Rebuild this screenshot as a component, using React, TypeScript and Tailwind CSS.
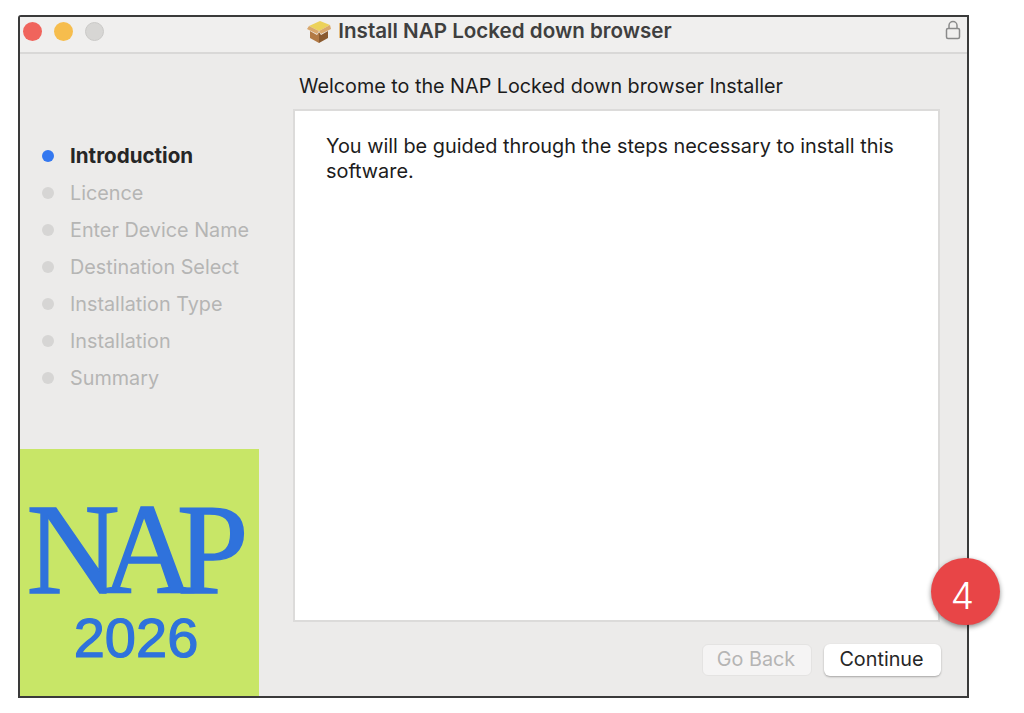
export default function App() {
  const steps = ["Licence", "Enter Device Name", "Destination Select", "Installation Type", "Installation", "Summary"];
  return (
    <div className="relative w-[1024px] h-[713px] bg-white overflow-hidden pl-[18px] pt-[15px] font-['Inter','Liberation_Sans',sans-serif]">
      <div className="flex flex-col w-[951px] h-[683px] border-2 border-[#3a3a3a] bg-[#ecebea] rounded-tl-[3px]">
        <div className="relative flex items-center h-[37px] bg-[#f0efee] border-b-2 border-[#d9d8d7] pl-[3px] pb-[6px] shrink-0">
          <div className="flex gap-[12px]">
            <span className="w-[19px] h-[19px] rounded-full bg-[#f0645c]" />
            <span className="w-[19px] h-[19px] rounded-full bg-[#f6bd4d]" />
            <span className="w-[19px] h-[19px] rounded-full bg-[#d7d6d4] border border-[#cbcac8]" />
          </div>
          <div className="flex-1 flex justify-center items-center gap-[7px] pr-[70px]">
            <svg width="24" height="22" viewBox="0 0 24 22">
              <path d="M13 0 L23 4 L12 10 L2 5 Z" fill="#ecd25a" />
              <path d="M2 5 L12 10 L23 4 L24 8 L14 13 L12 10 L10 13 L0 8 Z" fill="#d9a76c" />
              <path d="M3 10 L10 14 L12 11 L12 22 L3 17 Z" fill="#b27a45" />
              <path d="M21 10 L14 14 L12 11 L12 22 L21 17 Z" fill="#8a5a2f" />
            </svg>
            <span className="text-[20.6px] leading-none font-semibold text-[#3f3f3f]">Install NAP Locked down browser</span>
          </div>
          <svg className="mr-[6px] mb-[4px]" width="16" height="20" viewBox="0 0 16 20" fill="none" stroke="#8a8a8a" strokeWidth="1.5">
            <rect x="1.5" y="8.5" width="13" height="10" rx="1.5" />
            <path d="M4 8.5 V5.5 a4 4 0 0 1 8 0 V8.5" />
          </svg>
        </div>
        <div className="flex flex-1 min-h-0">
          <div className="flex flex-col justify-between w-[239px] shrink-0">
            <ul className="flex flex-col gap-[13px] pt-[90px] pl-[22px]">
              <li className="flex items-center h-[24px] gap-[16px] text-[20.6px] font-bold text-[#262626]">
                <span className="w-[12px] h-[12px] rounded-full bg-[#3478f0]" />
                <span>Introduction</span>
              </li>
              {steps.map((s) => (
                <li key={s} className="flex items-center h-[24px] gap-[16px] text-[19.8px] text-[#b5b5b4]">
                  <span className="w-[12px] h-[12px] rounded-full bg-[#d6d5d4]" />
                  <span className="pt-[2px]">{s}</span>
                </li>
              ))}
            </ul>
            <div className="flex flex-col items-center h-[247px] bg-[#c8e667] text-[#2f72dc] overflow-hidden">
              <span className="mt-[51px] pr-[22px] text-[129px] leading-[100px] tracking-[-18px] font-['Liberation_Serif',serif] [-webkit-text-stroke:1.5px_#2f72dc]">NAP</span>
              <span className="mt-[8px] pr-[7px] text-[56px] leading-[60px] font-['Liberation_Sans',sans-serif] [-webkit-text-stroke:1.2px_#2f72dc]">2026</span>
            </div>
          </div>
          <div className="flex flex-col flex-1 pl-[34px] pr-[27px]">
            <h1 className="h-[55px] pt-[19px] pl-[6px] text-[19.75px] leading-[26px] font-normal text-[#1c1c1c]">Welcome to the NAP Locked down browser Installer</h1>
            <div className="h-[513px] bg-white border-2 border-[#dcdbda] pl-[31px] pr-[30px] pt-[23px] text-[19.87px] leading-[25px] text-[#1c1c1c]">
              You will be guided through the steps necessary to install this software.
            </div>
            <div className="flex justify-end gap-[12px] mt-[22px] -mr-[1px]">
              <button className="w-[110px] h-[32px] pb-[1px] pr-[2px] rounded-[6px] bg-[#f5f4f4] border border-[#e4e3e2] text-[19.8px] leading-none text-[#b5b5b4]">Go Back</button>
              <button className="w-[117px] h-[32px] pb-[1px] pr-[2px] rounded-[6px] bg-white shadow-[0_1px_2px_rgba(0,0,0,0.3)] text-[19.8px] leading-none text-[#262626]">Continue</button>
            </div>
          </div>
        </div>
      </div>
      <div className="absolute left-[931px] top-[558px] flex items-center justify-center w-[69px] h-[67px] pt-[8px] pr-[6px] rounded-full bg-[#e84547] shadow-[0_2px_5px_rgba(0,0,0,0.45)] text-white text-[37px] font-light leading-none">4</div>
    </div>
  );
}
